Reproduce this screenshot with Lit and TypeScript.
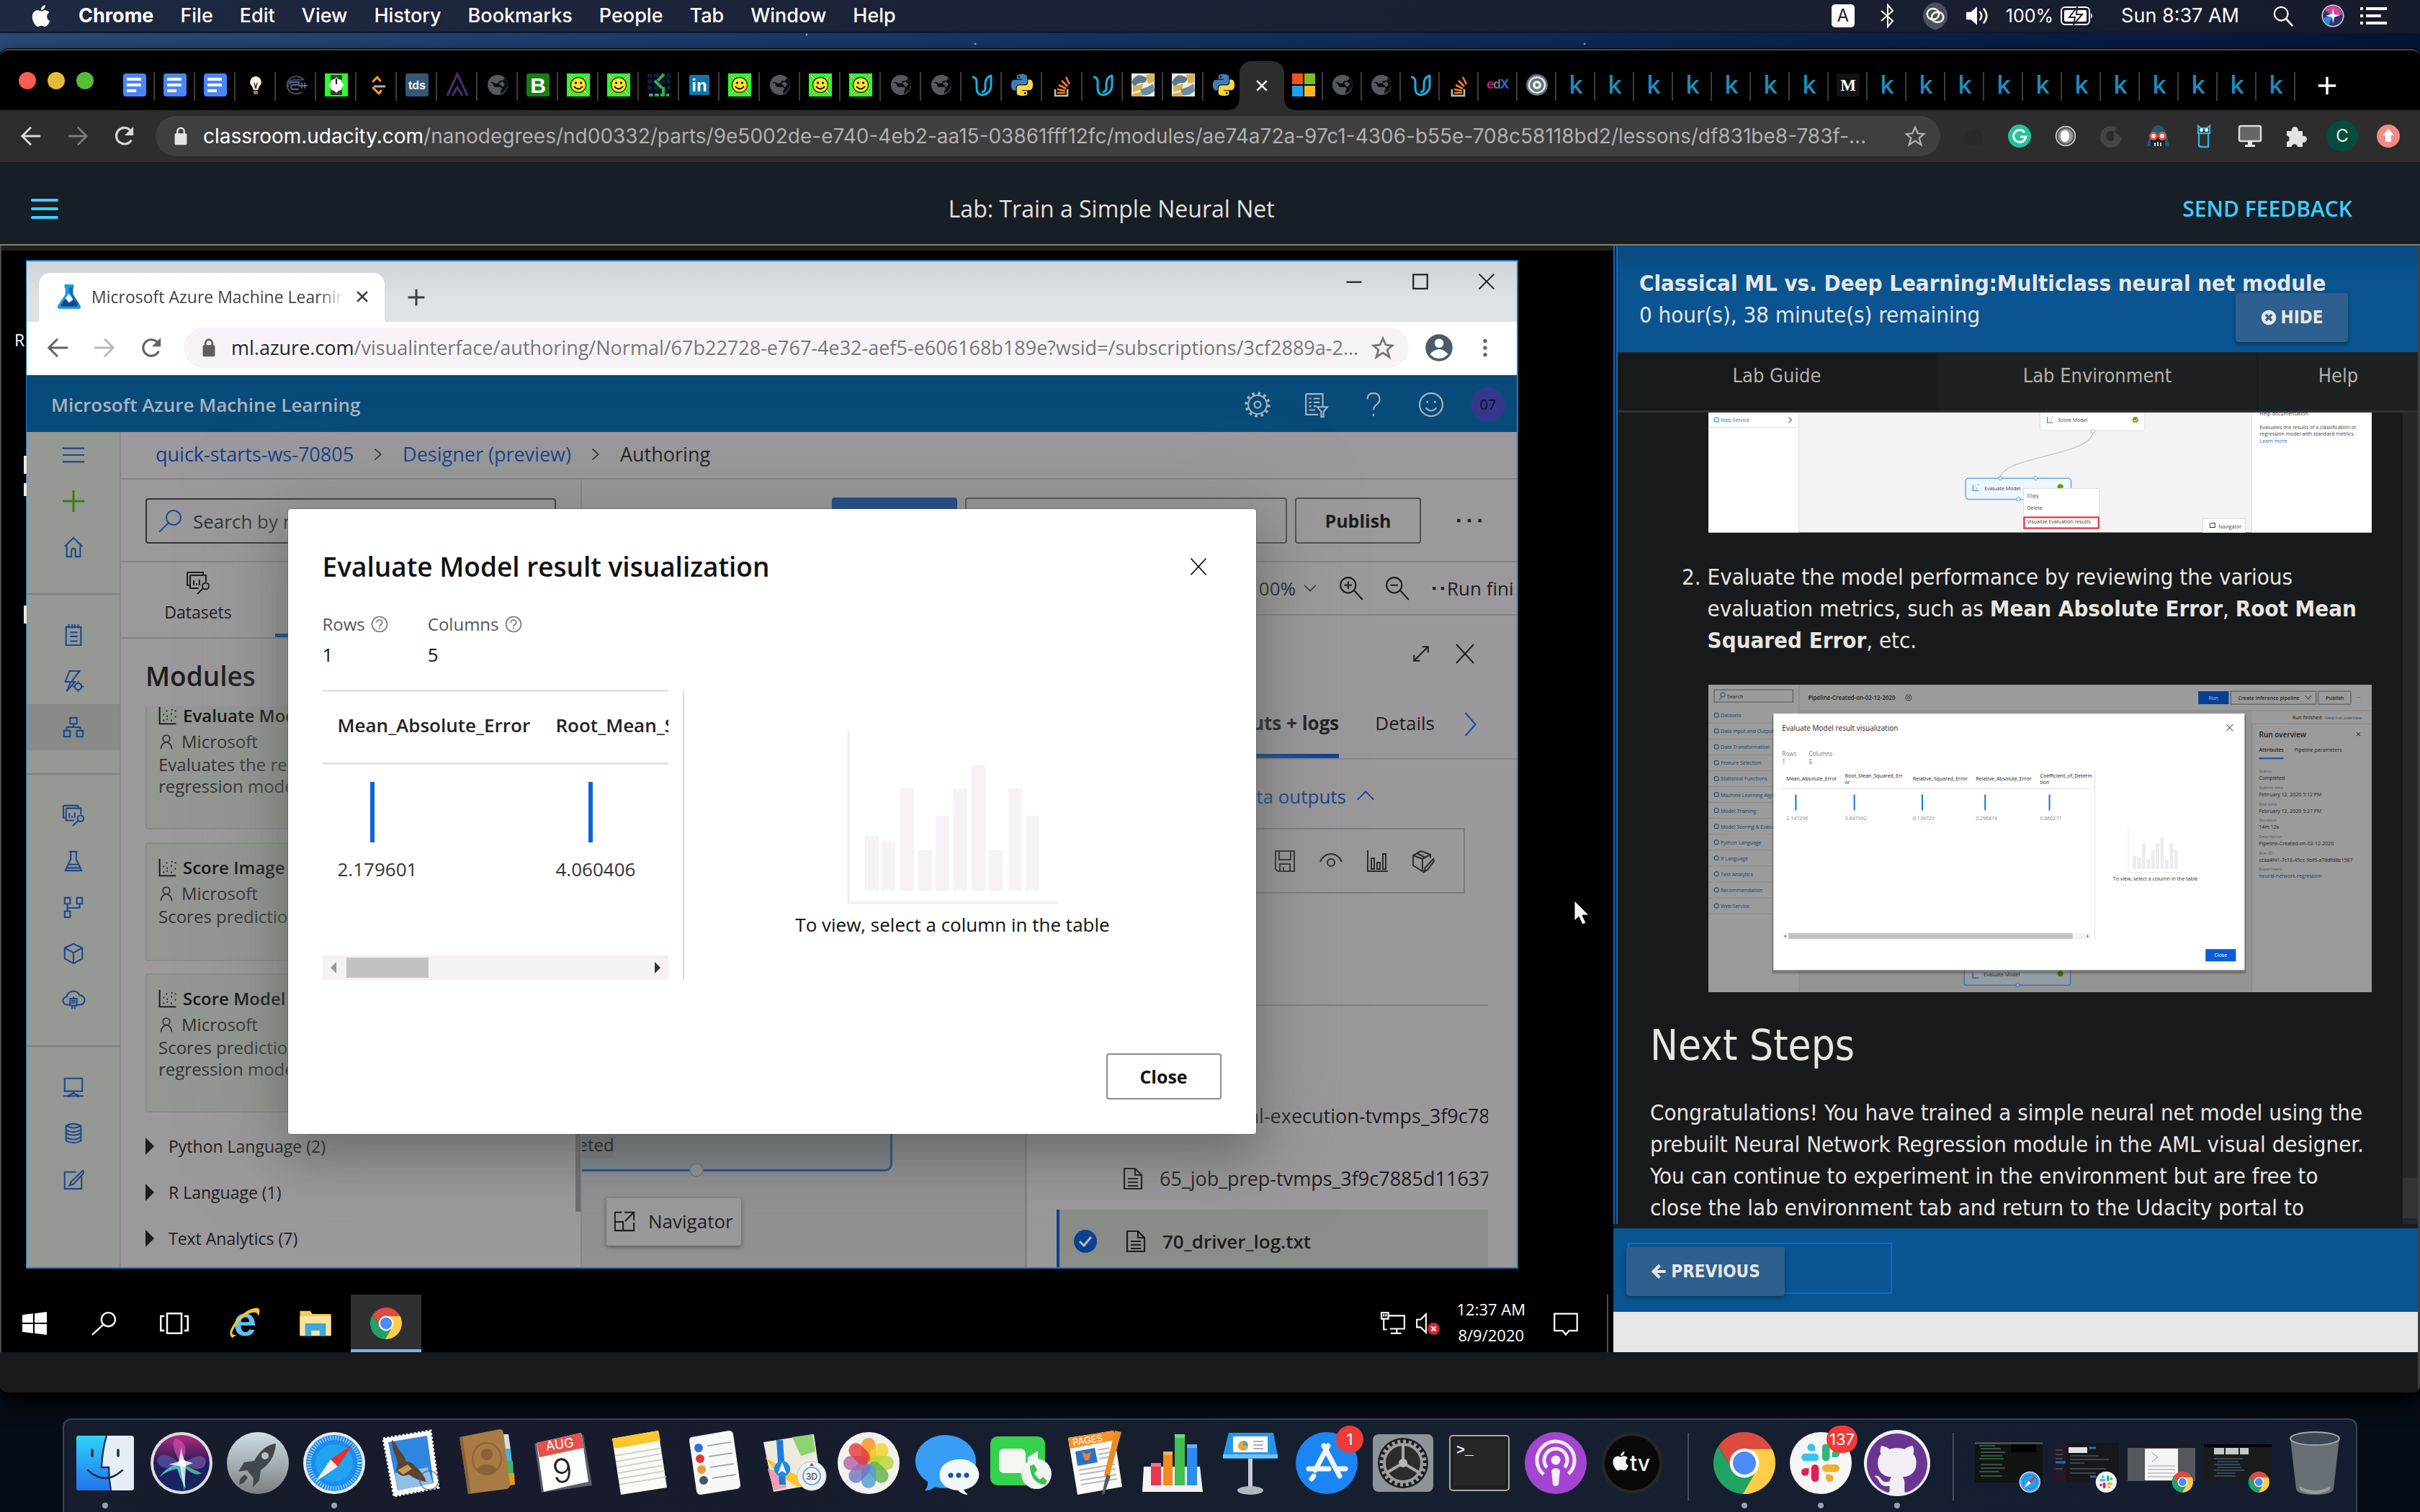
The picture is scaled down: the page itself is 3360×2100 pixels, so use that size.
import { LitElement, html, svg, css, TemplateResult } from "lit";
import { customElement } from "lit/decorators.js";

type Frag = unknown;

const reset = css`
  * { box-sizing: border-box; }
  button { font: inherit; color: inherit; background: none; border: 0; padding: 0; margin: 0; cursor: pointer; text-align: inherit; }
  a { color: inherit; text-decoration: none; }
  svg { display: block; flex: none; overflow: visible; }
  p, h1, h2, h3, ol, ul { margin: 0; padding: 0; font-weight: inherit; font-size: inherit; }
`;

const icon = (size: number, body: Frag, vb = 32): TemplateResult =>
  html`<svg width=${size} height=${size} viewBox="0 0 ${vb} ${vb}" fill="none" aria-hidden="true">${body}</svg>`;

const line = (size: number, d: string, w = 2): TemplateResult =>
  html`<svg width=${size} height=${size} viewBox="0 0 32 32" fill="none" stroke="currentColor" stroke-width=${w} aria-hidden="true"><path d=${d} /></svg>`;

const applePath =
  "M12.152 6.896c-.948 0-2.415-1.078-3.96-1.04-2.04.027-3.91 1.183-4.961 3.014-2.117 3.675-.546 9.103 1.519 12.09 1.013 1.454 2.208 3.09 3.792 3.039 1.52-.065 2.09-.987 3.935-.987 1.831 0 2.35.987 3.96.948 1.637-.026 2.676-1.48 3.676-2.948 1.156-1.688 1.636-3.325 1.662-3.415-.039-.013-3.182-1.221-3.22-4.857-.026-3.04 2.48-4.494 2.597-4.559-1.429-2.09-3.623-2.324-4.39-2.376-2-.156-3.675 1.09-4.61 1.09zM15.53 3.83c.843-1.012 1.4-2.427 1.245-3.83-1.207.052-2.662.805-3.532 1.818-.78.896-1.454 2.338-1.273 3.714 1.338.104 2.715-.688 3.559-1.701";

const octocatPath =
  "M12 .297c-6.63 0-12 5.373-12 12 0 5.303 3.438 9.8 8.205 11.385.6.113.82-.258.82-.577 0-.285-.01-1.04-.015-2.04-3.338.724-4.042-1.61-4.042-1.61C4.422 18.07 3.633 17.7 3.633 17.7c-1.087-.744.084-.729.084-.729 1.205.084 1.838 1.236 1.838 1.236 1.07 1.835 2.809 1.305 3.495.998.108-.776.417-1.305.76-1.605-2.665-.3-5.466-1.332-5.466-5.93 0-1.31.465-2.38 1.235-3.22-.135-.303-.54-1.523.105-3.176 0 0 1.005-.322 3.3 1.23.96-.267 1.98-.399 3-.405 1.02.006 2.04.138 3 .405 2.28-1.552 3.285-1.23 3.285-1.23.645 1.653.24 2.873.12 3.176.765.84 1.23 1.91 1.23 3.22 0 4.61-2.805 5.625-5.475 5.92.42.36.81 1.096.81 2.22 0 1.606-.015 2.896-.015 3.286 0 .315.21.69.825.57C20.565 22.092 24 17.592 24 12.297c0-6.627-5.373-12-12-12";

const snake =
  "M14.25.18l.9.2.73.26.59.3.45.32.34.34.25.34.16.33.1.3.04.26.02.2-.01.13V8.5l-.05.63-.13.55-.21.46-.26.38-.3.31-.33.25-.35.19-.35.14-.33.1-.3.07-.26.04-.21.02H8.77l-.69.05-.59.14-.5.22-.41.27-.33.32-.27.35-.2.36-.15.37-.1.35-.07.32-.04.27-.02.21v3.06H3.17l-.21-.03-.28-.07-.32-.12-.35-.18-.36-.26-.36-.36-.35-.46-.32-.59-.28-.73-.21-.88-.14-1.05-.05-1.23.06-1.22.16-1.04.24-.87.32-.71.36-.57.4-.44.42-.33.42-.24.4-.16.36-.1.32-.05.24-.01h.16l.06.01h8.16v-.83H6.18l-.01-2.75-.02-.37.05-.34.11-.31.17-.28.25-.26.31-.23.38-.2.44-.18.51-.15.58-.12.64-.1.71-.06.77-.04.84-.02 1.27.05zm-6.3 1.98l-.23.33-.08.41.08.41.23.34.33.22.41.09.41-.09.33-.22.23-.34.08-.41-.08-.41-.23-.33-.33-.22-.41-.09-.41.09z";

/* Chrome wheel on a 48 unit grid */
const wheel = (): Frag => svg`
  <g>
    ${[["#dd4b3e", 0], ["#1fa463", -120], ["#ffcd46", 120]].map(
      ([c, r]) => svg`<path fill=${c} transform="rotate(${r} 24 24)" d="M24 14H43.6A22 22 0 0 0 5.55 12.02L15.34 29A10 10 0 0 1 24 14z" />`
    )}
    <circle cx="24" cy="24" r="10.4" fill="#fff" />
    <circle cx="24" cy="24" r="8.2" fill="#4c8bf5" />
  </g>`;

/* Slack mark on a 24 unit grid */
const hash = (): Frag => svg`
  ${[["#2eb67d", 0], ["#ecb22e", 90], ["#e01e5a", 180], ["#36c5f0", 270]].map(
    ([c, r]) => svg`<g fill=${c} transform="rotate(${r} 12 12)"><rect x="13" y="0.5" width="4.6" height="10.5" rx="2.3" /><path d="M19 8.7V6.4a2.3 2.3 0 1 1 2.3 2.3z" /></g>`
  )}`;

const compass = (): Frag => svg`
  <circle cx="48" cy="48" r="43" fill="#e9edf0" /><circle cx="48" cy="48" r="39" fill="#1d8bf0" />
  <circle cx="48" cy="48" r="26" fill="#25b4f2" opacity=".6" />
  <circle cx="48" cy="48" r="35" stroke="#fff" stroke-width="6" stroke-dasharray="1 2.7" opacity=".85" />
  <path d="M74 22L53 53 43 43z" fill="#e8302f" /><path d="M22 74L43 43 53 53z" fill="#f2f2f2" />`;

/* ---------------- menu bar ---------------- */

@customElement("mac-menubar")
export class MacMenubar extends LitElement {
  static styles = [reset, css`
    :host { display: flex; align-items: center; justify-content: space-between; height: 46px; flex: none; padding: 0 46px 0 42px;
      background: linear-gradient(90deg, #1d2a42, #1b2033 50%, #171c2d); border-bottom: 2px solid #10182b;
      color: #fff; font: 500 27px/44px Inter, sans-serif; white-space: nowrap; }
    .menus { display: flex; gap: 37px; align-items: center; }
    .app { font-weight: 700; }
    .status { display: flex; gap: 22px; align-items: center; font-weight: 400; }
    .input { width: 32px; height: 32px; border-radius: 5px; background: #fff; color: #1b2033; font-size: 24px; line-height: 32px; text-align: center; }
    .pad { padding: 0 8px; }
    .slot { padding: 0 16px; }
    .thin { padding: 0 8px; }
    .power { display: flex; gap: 10px; align-items: center; padding-right: 8px; font-size: 25px; }
  `];
  render() {
    return html`
      <nav class="menus" aria-label="Menu bar">
        <svg width="30" height="32" viewBox="0 0 24 24" fill="#fff" role="img" aria-label="Apple"><path d=${applePath} /></svg>
        <button class="app">Chrome</button>
        ${["File", "Edit", "View", "History", "Bookmarks", "People", "Tab", "Window", "Help"].map((m) => html`<button>${m}</button>`)}
      </nav>
      <div class="status">
        <span class="input">A</span>
        <span class="thin">${line(32, "M7 9l16 14-7 8V1l7 8L7 23", 2)}</span>
        ${icon(40, svg`<path d="M16 1a15 15 0 0 1 6 28l-6 3-6-3A15 15 0 0 1 16 1z" fill="#4b5060" /><rect x="7" y="8" width="13" height="12" rx="6" stroke="#fff" stroke-width="2" /><rect x="12" y="12" width="13" height="11" rx="5.500" stroke="#fff" stroke-width="2" />`)}
        ${icon(34, svg`<path d="M1 11h6l8-7v24l-8-7H1z" fill="#fff" /><path d="M19 11q4 5 0 10M24 7q7 9 0 18" stroke="#fff" stroke-width="2.4" stroke-linecap="round" />`)}
        <span class="power">100%
          <svg width="46" height="26" viewBox="0 0 46 26" fill="none" aria-hidden="true"><rect x="1" y="1" width="39" height="24" rx="5" stroke="#fff" stroke-width="2" /><rect x="5" y="5" width="31" height="16" rx="2" fill="#fff" /><path d="M23 1L12 15h8l-2 10 12-14h-8z" fill="#fff" stroke="#1b2033" stroke-width="2" /><path d="M42 9q4 4 0 8z" fill="#fff" /></svg>
        </span>
        <span class="pad">Sun 8:37 AM</span>
        <span class="slot">${icon(30, svg`<circle cx="13" cy="13" r="10" stroke="#fff" stroke-width="2.4" /><path d="M20 20l10 11" stroke="#fff" stroke-width="2.8" />`)}</span>
        ${icon(32, svg`<circle cx="16" cy="16" r="15.5" fill="#ddd" /><circle cx="16" cy="16" r="14" fill="#31336e" /><path d="M16 2a14 14 0 0 1 13 12L16 17 5 8a14 14 0 0 1 11-6z" fill="#d0479c" /><path d="M2 19l14-3-6 13A14 14 0 0 1 2 19z" fill="#2a8cd8" /><path d="M16 5l2 9 8 1-8 3-2 9-1-9-9-2 9-3z" fill="#e9fbff" />`)}
        <svg width="37" height="26" viewBox="0 0 37 26" fill="#fff" aria-hidden="true"><path d="M0 1h4v4H0zM0 11h4v4H0zM0 21h4v4H0zM8 1h29v4H8zM8 11h21v4H8zM8 21h29v4H8z" /></svg>
      </div>`;
  }
}

/* ---------------- browser tabs and toolbar ---------------- */

const smile = svg`<rect width="32" height="32" fill="#2cff2c" /><path d="M3 3l26 26M29 3L3 29" stroke="#7b6a2a" stroke-width="3" /><path d="M3 3l26 26M29 3L3 29" stroke="#f4f0d8" stroke-width="1.500" /><circle cx="16" cy="16" r="10.5" fill="#ffe12e" stroke="#3b3200" stroke-width="1.4" /><circle cx="12.5" cy="13" r="1.6" fill="#000" /><circle cx="19.5" cy="13" r="1.6" fill="#000" /><path d="M10 18q6 7 12 0" stroke="#000" stroke-width="1.8" />`;
const globe = svg`<circle cx="16" cy="16" r="14" fill="#55585d" /><path d="M5 13q4-2 6 0t6 0q0-3 4-3t4-4q5 4 5 10-2 9-10 12-1-3 1-5t-1-4h-6q-4 0-4-3t-5-3z" fill="#0c0d0e" /><path d="M17 13q3 1 5-2l4 4-3 4z" fill="#55585d" />`;
const letter = (bg: string, fg: string, t: string, size: number, family = "Liberation Sans"): Frag =>
  svg`<rect width="32" height="32" rx="3" fill=${bg} /><text x="16" y=${16 + size * 0.36} text-anchor="middle" font-family=${family} font-weight="700" font-size=${size} fill=${fg}>${t}</text>`;

const favicons: Record<string, Frag> = {
  doc: svg`<rect width="32" height="32" rx="4" fill="#4a86f7" /><path d="M5 6h20v4H5zM5 14h20v4H5zM5 22h13v4H5z" fill="#fff" />`,
  bulb: svg`<path d="M16 4a8 8 0 0 1 5 14l-2 5h-6l-2-5a8 8 0 0 1 5-14z" fill="#fff3dc" /><path d="M13 24h6v5h-6z" fill="#8a8274" /><path d="M14 13l2 8 2-8" stroke="#222" stroke-width="1.4" />`,
  orbit: svg`<path d="M27 9A13 12 0 1 0 24 26M5 19q-1-9 8-10h12" stroke="#3d4c66" stroke-width="2.2" /><path d="M8 15q0-3 4-3h8v4h-8q-3 0-3 3t3 3h8M20 17h6M24 13v8M28 13v8M26 17h6" stroke="#55709a" stroke-width="1.800" />`,
  power: svg`<rect width="32" height="32" fill="#2cff2c" /><rect x="8" y="2" width="16" height="28" fill="#353535" /><path d="M16 5l3 3 4 1 1 4 3 3-3 3-1 4-4 1-3 3-3-3-4-1-1-4-3-3 3-3 1-4 4-1z" fill="#fff" /><path d="M16 7v8" stroke="#000" stroke-width="2" />`,
  leet: svg`<path d="M17 5l-6 6M21 10l-4-4M11 20l8 8M22 24l-3 4" stroke="#ffa116" stroke-width="3" stroke-linecap="round" /><path d="M12 18h16" stroke="#b3b3b3" stroke-width="3" />`,
  tds: letter("#355876", "#fff", "tds", 16),
  peak: svg`<path d="M2 31L14 5l2-4 2 4 12 26M9 31l7-12 7 12" stroke="#452c63" stroke-width="3.400" />`,
  globe,
  bold: letter("#148014", "#fff", "B", 30),
  smile,
  stride: svg`<rect width="32" height="32" fill="#05091a" /><path d="M0 3h32M0 11h32M0 20h32" stroke="#11203a" stroke-width="5" stroke-dasharray="6 3" /><path d="M23 1l-9 9M10 10l10 10M22 19v12" stroke="#2fae55" stroke-width="4" /><path d="M2 30h28" stroke="#2fae55" stroke-width="4" stroke-dasharray="6 2" />`,
  li: svg`<rect x="2" y="2" width="28" height="28" rx="2" fill="#0e76a8" /><text x="16" y="25" text-anchor="middle" font-family="Liberation Sans" font-weight="700" font-size="24" fill="#fff">in</text>`,
  u: svg`<path d="M3 5q6 0 6 7v8q0 9 7 10 13-2 13-14V3q-8 2-8 12v6q0 4-5 5" stroke="#17b1e3" stroke-width="3" stroke-linejoin="round" />`,
  py: svg`<g transform="translate(1 1) scale(1.25)"><path d=${snake} fill="#3d7fb4" /><path d=${snake} fill="#ffd63f" transform="rotate(180 12 12)" /></g>`,
  pyold: svg`<rect width="32" height="32" fill="#f0ecdf" /><path d="M0 12q6-12 14-9l8 3q-2 8-8 7T4 20z" fill="#57788f" /><path d="M20 2l11-2v12l-8 2z" fill="#d9b24b" /><path d="M2 16q6 2 14-2l-2 8-12 4z" fill="#d9b24b" /><path d="M12 22q10-2 18-8l2 10q-8 8-18 6z" fill="#6b8ca3" /><path d="M2 28l12-2 2 6H0z" fill="#d9b24b" />`,
  so: svg`<path d="M6 22v9h17v-9" stroke="#b9bcc0" stroke-width="2.6" /><path d="M9 27h11M9 22l11 2M11 16l10 5M15 10l8 8M21 5l5 10" stroke="#f58025" stroke-width="2.6" />`,
  ms: svg`<path d="M0 0h15v15H0z" fill="#f1511b" /><path d="M17 0h15v15H17z" fill="#80bb1f" /><path d="M0 17h15v15H0z" fill="#1ba1ee" /><path d="M17 17h15v15H17z" fill="#fbb724" />`,
  edx: svg`<g font-family="Liberation Sans" font-weight="700" font-size="18"><text x="0" y="21" fill="#b8256e">e</text><text x="9" y="21" fill="#6d7377">d</text><text x="19" y="21" fill="#1f74d6">X</text></g>`,
  swirl: svg`<circle cx="16" cy="16" r="15" fill="#66727a" /><path d="M25 10a11 11 0 0 0-20 6q0 5 4 8M7 22a11 11 0 0 0 20-6q0-5-4-8" stroke="#e6eaec" stroke-width="2.600" /><circle cx="16" cy="16" r="6" fill="#e6eaec" /><circle cx="16" cy="16" r="2.500" fill="#66727a" />`,
  k: svg`<text x="16" y="28" text-anchor="middle" font-family="Open Sans" font-weight="600" font-size="34" fill="#1a8dbe">k</text>`,
  m: letter("#121212", "#fff", "M", 23, "Liberation Serif"),
};

const before = "doc doc doc bulb orbit power leet tds peak globe bold smile smile stride li smile globe smile smile globe globe u py so u pyold pyold py".split(" ");
const after = "ms globe globe u so edx swirl k k k k k k k m k k k k k k k k k k k".split(" ");

@customElement("browser-chrome")
export class BrowserChrome extends LitElement {
  static styles = [reset, css`
    :host { display: block; flex: none; font: 28px/36px Inter, sans-serif; }
    .strip { display: flex; align-items: flex-end; height: 83px; background: #000; padding-left: 26px; }
    .lights { display: flex; gap: 16px; height: 83px; padding-top: 30px; width: 133px; flex: none; }
    .lights button { width: 24px; height: 24px; border-radius: 50%; }
    .red { background: #fd5b55; } .yellow { background: #e2ba3a; } .green { background: #58bd36; }
    .tab { width: 56px; height: 83px; padding-top: 32px; display: flex; justify-content: center; position: relative; flex: none; }
    .tab.small { width: 54px; }
    .tab::after { content: ""; position: absolute; right: 0; top: 30px; height: 40px; width: 2px; background: #3c3c3c; }
    .tab.last::after { display: none; }
    .active { width: 62px; height: 68px; border-radius: 16px 16px 0 0; background: #2d2d2d; color: #e8e8e8; display: flex; align-items: center; justify-content: center; flex: none; position: relative; margin-left: -6px; }
    .active::before, .active::after { content: ""; position: absolute; bottom: 0; width: 14px; height: 14px; }
    .active::before { left: -14px; background: radial-gradient(circle at 0 0, transparent 13px, #2d2d2d 14px); }
    .active::after { right: -14px; background: radial-gradient(circle at 14px 0, transparent 13px, #2d2d2d 14px); }
    .plus { height: 83px; padding: 14px 0 0 30px; }
    .bar { display: flex; align-items: center; height: 74px; background: #2d2d2d; border-bottom: 2px solid #1c1c1c; padding: 0 28px; gap: 16px; }
    .navs { display: flex; gap: 35px; color: #d9d9d9; padding-right: 12px; }
    .dim { color: #7b7b7b; }
    .omni { flex: 1; min-width: 0; height: 56px; border-radius: 28px; background: #3f3f3f; display: flex; align-items: center; gap: 16px; padding: 0 20px; white-space: nowrap; color: #b0b0b0; }
    .omni b { color: #fff; font-weight: 400; }
    .url { flex: 1; overflow: hidden; }
    .ext { display: flex; gap: 32px; align-items: center; padding-left: 14px; }
    .me { width: 44px; height: 44px; margin: 0 -6px; border-radius: 50%; background: #054c3c; color: #e6f2ee; font-size: 24px; line-height: 44px; text-align: center; }
  `];
  render() {
    return html`
      <div class="strip">
        <div class="lights"><button class="red" aria-label="Close"></button><button class="yellow" aria-label="Minimize"></button><button class="green" aria-label="Zoom"></button></div>
        ${before.map((f, i) => html`<button class="tab ${i === before.length - 1 ? "last" : ""}" aria-label="Tab ${i + 1}">${icon(32, favicons[f])}</button>`)}
        <button class="active" aria-label="Close tab">${line(24, "M7 7l18 18M25 7L7 25", 3.4)}</button>
        ${after.map((f, i) => html`<button class="tab small" aria-label="Tab ${i + 30}">${icon(32, favicons[f])}</button>`)}
        <button class="plus" aria-label="New tab">${icon(28, svg`<path d="M16 2v28M2 16h28" stroke="#fff" stroke-width="4" />`)}</button>
      </div>
      <div class="bar">
        <div class="navs">
          <button aria-label="Back">${line(30, "M30 16H4M16 3L3 16l13 13", 3)}</button>
          <button class="dim" aria-label="Forward">${line(30, "M2 16h26M16 3l13 13-13 13", 3)}</button>
          <button aria-label="Reload">${icon(30, svg`<path d="M26 22a12 12 0 1 1-1-14" stroke="currentColor" stroke-width="3.4" /><path d="M29 2v13H16z" fill="currentColor" />`)}</button>
        </div>
        <div class="omni">
          ${icon(30, svg`<rect x="7" y="12" width="18" height="17" rx="2" fill="#e4e4e4" /><path d="M11 13V9a5 5 0 0 1 10 0v4" stroke="#e4e4e4" stroke-width="2.6" />`)}
          <a class="url" href="#lesson"><b>classroom.udacity.com</b>/nanodegrees/nd00332/parts/9e5002de-e740-4eb2-aa15-03861fff12fc/modules/ae74a72a-97c1-4306-b55e-708c58118bd2/lessons/df831be8-783f-…</a>
          <button aria-label="Bookmark">${line(30, "M16 3l4 9 9 1-7 6 3 10-9-6-9 6 3-10-7-6 9-1z", 2.4)}</button>
        </div>
        <div class="ext">
          ${icon(32, svg`<path d="M4 28V12l12-8 12 8v16z" fill="#292929" />`)}
          ${icon(32, svg`<circle cx="16" cy="16" r="16" fill="#24c39a" /><path d="M23 11a8.5 8.5 0 1 0 1.600 6H17" stroke="#fff" stroke-width="3" />`)}
          ${icon(32, svg`<circle cx="16" cy="16" r="14" fill="#f3f3f3" /><circle cx="16" cy="16" r="11.500" stroke="#555" stroke-width="2.500" fill="#999" /><ellipse cx="15" cy="16" rx="6" ry="8" fill="#fff" />`)}
          ${icon(32, svg`<path d="M24 5a15 15 0 1 0 6 13l-8-1a7 7 0 1 1-3-7z" fill="#454545" /><path d="M19 10l9 6-9 6z" fill="#454545" />`)}
          ${icon(32, svg`<path d="M0 30l5-12Q8 0 17 1t12 17l3 12z" fill="#205a70" /><path d="M6 30V14h20v16z" fill="#12242e" /><circle cx="10" cy="16" r="4.500" fill="#f1e4dc" stroke="#e2513c" stroke-width="3" /><circle cx="22" cy="16" r="4.500" fill="#f1e4dc" stroke="#e2513c" stroke-width="3" /><path d="M12 25v5M16 24v6M20 25v5" stroke="#fff" stroke-width="1.600" />`)}
          ${icon(32, svg`<path d="M9 12v16q0 3 4 3h9V12M8 2l4 3h8l4-3v10H8z" stroke="#2eb1dd" stroke-width="2.400" /><circle cx="12.500" cy="7.500" r="2.500" fill="#fff" /><circle cx="19.500" cy="7.500" r="2.500" fill="#fff" />`)}
          ${icon(32, svg`<rect x="1" y="2" width="30" height="21" rx="2" fill="#666" stroke="#e0e0e0" stroke-width="2.400" /><path d="M13 23h6v5h4v3H9v-3h4z" fill="#e8e8e8" />`)}
          ${icon(32, svg`<path d="M3 9h7a4.500 4.500 0 1 1 8.500 0H25v7a4.500 4.500 0 1 1 0 8.500V31H18a4.300 4.300 0 0 0-8.500 0H3v-7a4.300 4.300 0 0 0 0-8.500z" fill="#e3e3e3" />`)}
          <div class="me">C</div>
          ${icon(32, svg`<circle cx="16" cy="16" r="16" fill="#f28b82" /><path d="M16 6l8 9h-4v9h-8v-9H8z" fill="#fff" />`)}
        </div>
      </div>`;
  }
}

/* ---------------- remote desktop with the Azure designer ---------------- */

const g = {
  menu: "M0 6h32M0 16h32M0 26h32",
  add: "M16 0v32M0 16h32",
  home: "M3 15L16 2l13 13M6 13v17h7v-9q0-3 3-3t3 3v9h7V13",
  note: "M5 4h22v27H5zM9 0v6M14 0v6M18 0v6M23 0v6M11 12h11M11 18h11M11 25h11",
  bolt: "M18 1h-8L4 17h8L6 31l12-14h-5L25 1zM18 24a5 5 0 1 0 10 0a5 5 0 1 0-10 0M23 16v3M23 29v3M15 24h3M28 24h3",
  tree: "M11 2h10v9H11zM2 21h9v9H2zM21 21h9v9h-9zM16 11v5M6 21v-5h20v5",
  data: "M1 2h22v4M1 2v18h4M5 6h22v9M5 6v18h12M10 13v7M14 17v3M18 12v8M22 21a4.500 4.500 0 1 0 9 0a4.500 4.500 0 1 0-9 0M23 24l-8 8",
  flask: "M10 2h12M12 2v11L4 30h24L20 13V2M8 21h16M6 26h20",
  pipe: "M3 2h8v9H3zM21 2h8v9h-8zM3 22h8v9H3zM7 11v11M25 11v6H7",
  cube: "M16 2l13 6v16l-13 7-13-7V8zM3 8l13 7 13-7M16 15v16",
  cloud: "M10 24H7a6 6 0 0 1-1-12 10 10 0 0 1 19-2 7 7 0 0 1 1 14h-4M11 15h10v10H11zM14 25v5M18 25v5M16 12v3M13 18h6M13 21h6",
  compute: "M3 3h26v19H3zM16 22v4M9 31v-3l7-3 7 3v3M1 29h30",
  db: "M5 5q11-6 22 0v22q-11 6-22 0zM5 5q11 6 22 0M5 11q11 6 22 0M5 16q11 6 22 0M5 22q11 6 22 0",
  edit: "M20 5H3v25h25V12M30 3L13 19l-3 6 6-2L31 7z",
  person: "M9 10a7 7 0 1 0 14 0a7 7 0 1 0-14 0M5 31q1-12 11-14 10 2 11 14",
  scatter: "M2 1v29h28M8 24h2M14 22h2M21 24h2M8 14h2M14 17h2M21 13h2M13 8h2M22 6h2M28 18h2M28 8h2",
  close: "M4 3l24 26M28 3L4 29",
  file: "M4 2h15l9 9v19H4zM19 2v9h9M9 16h14M9 21h14M9 26h14",
  magnify: "M11 11a10 10 0 1 0 20 0a10 10 0 1 0-20 0M14 18L1 31",
  chevR: "M10 6l11 10-11 10",
  expand: "M18 4h10v10M28 4L4 28M4 18v10h10",
};

const rail: [keyof typeof g, string, string][] = [
  ["menu", "Menu", ""], ["add", "New", "new"], ["home", "Home", "end"],
  ["note", "Notebooks", ""], ["bolt", "Automated ML", ""], ["tree", "Designer", "on end"],
  ["data", "Datasets", ""], ["flask", "Experiments", ""], ["pipe", "Pipelines", ""], ["cube", "Models", ""], ["cloud", "Endpoints", "end"],
  ["compute", "Compute", ""], ["db", "Datastores", ""], ["edit", "Data labeling", ""],
];

const modules: [string, string, string[]][] = [
  ["Evaluate Model", "first", ["Evaluates the results", "regression model with"]],
  ["Score Image Model", "second", ["Scores predictions for"]],
  ["Score Model", "", ["Scores predictions for", "regression model"]],
];

const bars = [[24, 76], [47, 68], [73, 142], [98, 56], [122, 104], [147, 142], [172, 174], [196, 56], [223, 142], [247, 104]];

@customElement("remote-desktop")
export class RemoteDesktop extends LitElement {
  static styles = [reset, css`
    :host { display: flex; flex-direction: column; min-height: 0; min-width: 0; position: relative; background: #000; font: 26px/36px "Open Sans", "Noto Sans", sans-serif; white-space: nowrap; border-left: 2px solid #4a4b4c; }
    .topline { height: 7px; background: #202123; flex: none; }
    .desk { flex: 1; min-height: 0; position: relative; padding: 13px 132px 36px 34px; display: flex; }
    .behind { position: absolute; color: #fff; font-size: 23px; left: 18px; top: 106px; }
    .mark { position: absolute; left: 31px; width: 4px; background: #e8e8e8; }
    .m1 { top: 285px; height: 25px; } .m2 { top: 323px; height: 18px; } .m3 { top: 493px; height: 25px; }
    .win { flex: 1; min-width: 0; display: flex; flex-direction: column; border: 2px solid #1d78c8; border-left-width: 1px; overflow: hidden; }
    .tabs { height: 84px; flex: none; background: linear-gradient(#cfd3d7, #dde2e6 60%); display: flex; justify-content: space-between; padding: 16px 30px 0 17px; color: #3c4043; }
    .tabs .left, .tabs .right { display: flex; }
    .tabs .tab { width: 480px; height: 68px; background: #fff; border-radius: 16px 16px 0 0; display: flex; align-items: center; gap: 14px; padding: 0 20px 2px 25px; font-size: 23px; }
    .tabs .t { flex: 1; overflow: hidden; -webkit-mask-image: linear-gradient(90deg, #000 90%, transparent); mask-image: linear-gradient(90deg, #000 90%, transparent); }
    .new { padding: 0 30px 0; }
    .ctl { display: flex; gap: 68px; height: 24px; color: #222; }
    .bar { height: 74px; flex: none; background: #fff; display: flex; align-items: center; gap: 30px; padding: 0 30px 2px 28px; color: #5f6368; }
    .omni { flex: 1; min-width: 0; height: 56px; border-radius: 28px; background: #f6f2f6; display: flex; align-items: center; gap: 16px; padding: 0 20px; color: #77777b; margin-right: -8px; font-size: 27px; }
    .omni a { flex: 1; overflow: hidden; } .omni b { font-weight: 400; color: #27282a; }
    .back { display: flex; gap: 35px; }
    .pale { color: #b9bbbd; }
    .aml { flex: 1; min-height: 0; position: relative; display: flex; flex-direction: column; background: #9c999c; color: #1d1c1e; }
    .head { height: 79px; flex: none; background: #084b7b; color: #a9b3ba; display: flex; align-items: center; justify-content: space-between; padding: 2px 16px 0 34px; }
    .head h1 { font-size: 26px; font-weight: 600; }
    .head div { display: flex; gap: 46px; align-items: center; }
    .avatar { width: 48px; height: 48px; border-radius: 50%; background: #35388a; color: #0d0d2c; font-size: 20px; line-height: 48px; text-align: center; margin-left: -8px; }
    .body { flex: 1; min-height: 0; display: flex; }
    .rail { width: 131px; flex: none; background: #959893; border-right: 2px solid #868786; color: #1c4790; display: flex; flex-direction: column; }
    .rail button { height: 64px; flex: none; display: flex; align-items: center; justify-content: center; width: 100%; }
    .rail .new-item { color: #3c7d10; }
    .rail .gap { height: 34px; margin-bottom: 24px; border-bottom: 2px solid #7f817e; flex: none; }
    .rail .on { background: #888b87; }
    .main { flex: 1; min-width: 0; display: flex; flex-direction: column; }
    .crumbs { height: 66px; flex: none; border-bottom: 2px solid #858386; display: flex; align-items: center; gap: 22px; padding: 0 0 2px 48px; font-size: 27px; }
    .crumbs a { color: #123f8e; }
    .cols { flex: 1; min-height: 0; display: flex; }
    .side { width: 640px; flex: none; border-right: 2px solid #868786; display: flex; flex-direction: column; overflow: hidden; position: relative; }
    .find { height: 115px; flex: none; border-bottom: 2px solid #858386; padding: 26px 34px; }
    .search { height: 63px; border: 2px solid #343335; border-radius: 4px; display: flex; align-items: center; gap: 14px; padding: 0 16px; color: #1d4ea0; }
    .search input { flex: 1; min-width: 0; border: 0; background: none; font: inherit; color: #222; outline: 0; }
    .search input::placeholder { color: #333235; opacity: 1; }
    .switch { height: 106px; flex: none; border-bottom: 2px solid #858386; display: flex; font-size: 23px; line-height: 30px; }
    .switch button { width: 214px; display: flex; flex-direction: column; align-items: center; gap: 10px; padding-top: 12px; }
    .switch .cur { border-bottom: 5px solid #0a3f97; color: #0a3f97; }
    .side h2 { font-size: 37px; line-height: 48px; font-weight: 600; padding: 28px 0 0 34px; height: 94px; flex: none; }
    .card { margin: 0 34px 17px; background: #949792; border: 2px solid #8a8d88; border-radius: 3px; padding: 14px 16px 0; height: 165px; flex: none; font-size: 24px; line-height: 30px; color: #333; }
    .card.tall { height: 193px; }
    .clip { flex: none; overflow: hidden; height: 172px; margin-bottom: 17px; }
    .clip .card { margin-top: -22px; margin-bottom: 0; }
    .card h3 { font-size: 24px; font-weight: 600; line-height: 38px; color: #141414; display: flex; align-items: center; gap: 8px; }
    .card .by { display: flex; align-items: center; gap: 10px; line-height: 34px; }
    .cat { display: flex; align-items: center; gap: 20px; height: 64px; flex: none; padding: 0 0 4px 34px; font-size: 23px; font-weight: 500; }
    .tri { width: 0; height: 0; border-left: 12px solid #1d1c1e; border-top: 12px solid transparent; border-bottom: 12px solid transparent; }
    .thumb { position: absolute; right: 0; top: 640px; width: 7px; height: 377px; background: #6d6c6f; }
    .right { flex: 1; min-width: 0; display: flex; flex-direction: column; }
    .cmds { height: 115px; flex: none; border-bottom: 2px solid #858386; display: flex; align-items: center; justify-content: flex-end; gap: 11px; padding-right: 48px; }
    .cmds button { height: 64px; line-height: 60px; border: 2px solid #4f4d50; border-radius: 4px; text-align: center; font-weight: 700; font-size: 25px; }
    .cmds .run { width: 174px; background: #073a8b; border-color: #073a8b; color: #a9b6cc; }
    .cmds .inf { width: 447px; } .cmds .pub { width: 175px; }
    .cmds .more { border: 0; margin-left: 38px; }
    .zoom { height: 74px; flex: none; border-bottom: 2px solid #858386; display: flex; align-items: center; justify-content: flex-end; gap: 30px; overflow: hidden; padding-right: 3px; }
    .zoom .pct { display: flex; align-items: center; gap: 10px; }
    .zoom .state { margin-left: -42px; width: 94px; overflow: hidden; }
    .split { flex: 1; min-height: 0; display: flex; }
    .canvas { width: 618px; flex: none; background: #929093; border-right: 3px solid #828184; position: relative; overflow: hidden; }
    .node { position: absolute; left: -300px; top: 620px; width: 731px; height: 152px; border: 3px solid #1a4a96; border-radius: 10px; background: #80868e; }
    .done { position: absolute; left: -78px; top: 717px; width: 122px; text-align: right; padding-right: 2px; font-size: 24px; background: #7c7e82; color: #111; }
    .port { position: absolute; left: 149px; top: 760px; width: 20px; height: 20px; border-radius: 50%; border: 2px solid #767679; background: #989699; }
    .navi { position: absolute; left: 34px; top: 809px; width: 187px; height: 66px; background: #9b999c; border-radius: 3px; box-shadow: 0 2px 6px rgba(0,0,0,.4); display: flex; align-items: center; gap: 18px; padding: 0 0 3px 10px; font-size: 26px; }
    .pane { flex: 1; min-width: 0; display: flex; flex-direction: column; padding: 0 40px 0 41px; overflow: hidden; background: #9b989b; }
    .pane .tools { height: 106px; flex: none; display: flex; justify-content: flex-end; align-items: center; gap: 32px; padding-right: 16px; }
    .ptabs { height: 94px; flex: none; border-bottom: 2px solid #8a888b; margin: 0 -40px 0 -41px; padding-right: 48px; display: flex; justify-content: flex-end; align-items: stretch; gap: 50px; line-height: 86px; }
    .ptabs .cur { font-weight: 700; border-bottom: 6px solid #0d4093; }
    .ptabs svg { margin: 28px 0 0 -18px; color: #164ea8; }
    .outs { height: 95px; flex: none; display: flex; justify-content: flex-end; align-items: center; gap: 14px; color: #123f8e; padding: 6px 157px 0 0; }
    .icons { height: 91px; flex: none; border: 2px solid #7d7b7e; margin-right: 32px; display: flex; align-items: center; justify-content: flex-end; gap: 32px; padding-right: 40px; color: #2c2b2d; }
    .rule { height: 156px; flex: none; border-bottom: 2px solid #807e81; }
    .files { padding-top: 109px; overflow: hidden; list-style: none; }
    .files li { height: 87px; display: flex; align-items: center; font-size: 27px; overflow: hidden; padding-left: 90px; gap: 21px; }
    .files .sel { background: #8b8d89; border-left: 4px solid #0d4093; padding-left: 20px; font-weight: 600; font-size: 26px; }
    .files .sel svg:first-child { margin-right: 17px; }
    .veil { position: absolute; inset: 0; display: flex; align-items: center; justify-content: center; }
    .modal { width: 1344px; background: #fff; border-radius: 4px; padding: 48px; box-shadow: 0 30px 60px rgba(30,30,30,.28), 0 0 0 1px rgba(70,70,70,.3), 0 4px 120px 30px rgba(120,130,120,.45); color: #111; }
    .modal header { display: flex; justify-content: space-between; height: 64px; align-items: center; padding-right: 18px; }
    .modal header h2 { font-size: 37px; line-height: 48px; font-weight: 600; }
    .meta { display: flex; gap: 55px; margin-top: 32px; }
    .meta dt { display: flex; gap: 8px; align-items: center; font-size: 24px; line-height: 32px; color: #555; }
    .meta dd { margin: 10px 0 0; line-height: 32px; }
    dl { margin: 0; }
    .result { display: flex; gap: 20px; margin-top: 33px; height: 403px; }
    .grid { width: 480px; overflow: hidden; display: flex; flex-direction: column; justify-content: space-between; }
    table { border-collapse: collapse; table-layout: fixed; width: 909px; border-top: 3px solid #e4e2e4; }
    th, td { padding: 0 0 0 21px; text-align: left; font-size: 26px; }
    th { height: 101px; font-weight: 600; border-bottom: 3px solid #e4e2e4; padding-bottom: 6px; color: #222; }
    td { padding-top: 24px; line-height: 36px; color: #333; }
    .spark { width: 6px; height: 84px; background: #0f62dc; margin: 0 0 19px 45px; }
    .scroll { height: 34px; background: #f5f1f5; display: flex; align-items: center; padding: 0 11px; gap: 18px; }
    .scroll i { border: 8px solid transparent; border-right: 8px solid #999; border-left: 0; margin-right: -4px; }
    .scroll i.r { border-right: 0; border-left: 8px solid #333; margin: 0; }
    .scroll .track { flex: 1; } .scroll .thm { width: 114px; height: 28px; background: #c3c1c4; }
    .pick { flex: 1; border-left: 2px solid #dedcde; display: flex; flex-direction: column; align-items: center; gap: 10px; padding-top: 58px; }
    .modal footer { margin-top: 102px; display: flex; justify-content: flex-end; }
    .modal footer button { width: 160px; height: 64px; border: 2px solid #8b898c; border-radius: 4px; text-align: center; font-weight: 700; font-size: 25px; }
    .cursor { position: absolute; left: 2183px; top: 902px; }
    .task { height: 80px; flex: none; display: flex; align-items: center; color: #fff; padding-left: 28px; }
    .task .go { width: 98px; display: flex; justify-content: center; flex: none; }
    .task .go:first-child { width: 80px; margin-right: 7px; margin-left: -22px; }
    .task .active { background: #303032; height: 80px; align-items: center; border-bottom: 4px solid #76b9ed; padding-top: 4px; }
    .tray { margin-left: auto; display: flex; align-items: center; gap: 14px; height: 80px; padding-right: 7px; }
    .clock { font-size: 22px; line-height: 36px; text-align: center; padding: 0 24px 4px 9px; }
    .peek { width: 2px; height: 80px; background: #4e4e4e; margin-left: 25px; }
    .under { height: 56px; background: #191a1d; flex: none; margin-left: -2px; }
  `];

  private aml() {
    return html`
      <div class="aml">
        <div class="head">
          <h1>Microsoft Azure Machine Learning</h1>
          <div>
            ${icon(36, svg`<circle cx="16" cy="16" r="11.500" stroke="currentColor" stroke-width="1.800" /><circle cx="16" cy="16" r="4" stroke="currentColor" stroke-width="2" /><circle cx="16" cy="16" r="14" stroke="currentColor" stroke-width="3.400" stroke-dasharray="3.200 4.130" />`)}
            ${line(34, "M3 2h22v17M3 2v27h16M7 8h3M13 8h8M7 13h3M13 13h8M7 18h3M13 18h4M7 23h8M18 19h13l-5 6v7h-3v-7z")}
            ${line(34, "M8 9q0-8 8-8t8 8q0 4-4 7t-4 7M16 28v3")}
            ${line(34, "M1 16a15 15 0 1 0 30 0a15 15 0 1 0-30 0M11 11v3M21 11v3M9 20q7 8 14 0")}
            <span class="avatar">07</span>
          </div>
        </div>
        <div class="body">
          <nav class="rail" aria-label="Workspace">
            ${rail.map(([k, label, flag]) => html`<button class="${flag.includes("on") ? "on" : ""} ${flag === "new" ? "new-item" : ""}" aria-label=${label}>${line(30, g[k], flag === "new" ? 3.2 : 2.2)}</button>${flag.includes("end") ? html`<div class="gap"></div>` : ""}`)}
          </nav>
          <div class="main">
            <div class="crumbs"><a href="#ws">quick-starts-ws-70805</a>${line(24, g.chevR)}<a href="#designer">Designer (preview)</a>${line(24, g.chevR)}<span>Authoring</span></div>
            <div class="cols">
              <div class="side">
                <div class="find"><label class="search">${line(32, g.magnify, 2)}<input placeholder="Search by name" aria-label="Search by name" /></label></div>
                <div class="switch"><button>${line(32, g.data, 2)}Datasets</button><button class="cur">${line(32, g.cube, 2)}Modules</button></div>
                <h2>Modules</h2>
                ${modules.map(([name, cls, text], i) => {
                  const card = html`<div class="card ${i === 1 ? "" : "tall"}"><h3>${line(26, g.scatter, 2.4)}${name}</h3><div class="by">${line(22, g.person, 2.6)}Microsoft</div>${text.map((t) => html`<div>${t}</div>`)}</div>`;
                  return cls === "first" ? html`<div class="clip">${card}</div>` : card;
                })}
                ${["Python Language (2)", "R Language (1)", "Text Analytics (7)"].map((c) => html`<button class="cat"><span class="tri"></span>${c}</button>`)}
                <div class="thumb"></div>
              </div>
              <div class="right">
                <div class="cmds"><button class="run">Run</button><button class="inf">Create inference pipeline</button><button class="pub">Publish</button><button class="more" aria-label="More">${icon(36, svg`<path d="M1 14h4v4H1zM14 14h4v4h-4zM27 14h4v4h-4z" fill="#222" />`)}</button></div>
                <div class="zoom"><span class="pct">100% ${line(20, "M3 9l13 13L29 9", 2)}</span>${line(34, "M2 12a10 10 0 1 0 20 0a10 10 0 1 0-20 0M20 19l11 12M12 7v10M7 12h10")}${line(34, "M2 12a10 10 0 1 0 20 0a10 10 0 1 0-20 0M20 19l11 12M7 12h10")}${icon(34, svg`<path d="M2 14h4v4H2zM13 14h4v4h-4z" fill="#222" />`)}<span class="state">Run finished</span></div>
                <div class="split">
                  <div class="canvas">
                    <div class="node"></div><div class="done">Completed</div><div class="port"></div>
                    <button class="navi">${line(30, "M2 3h10M2 3v27h28V18M16 3h14v12M30 3L17 16M2 17h12v13", 2.2)}Navigator</button>
                  </div>
                  <div class="pane">
                    <div class="tools">${line(26, g.expand, 2.4)}${line(32, g.close, 2)}</div>
                    <div class="ptabs"><span class="cur">Outputs + logs</span><span>Details</span>${line(34, "M10 1l13 15-13 15", 2)}</div>
                    <div class="outs">Show data outputs ${line(26, "M2 22L16 8l14 14", 2)}</div>
                    <div class="icons">
                      ${line(32, "M3 2h26v28H6l-3-3zM8 2v12h16V2M9 30V20h14v10M14 24v5")}
                      ${line(32, "M1 17Q6 6 16 6t15 11M11 18a5 5 0 1 0 10 0a5 5 0 1 0-10 0")}
                      ${line(32, "M3 1v29h28M8 12h4v15H8zM16 18h4v9h-4zM24 6h4v21h-4z")}
                      ${line(32, "M13 2l13 5v5M13 2L2 8v14l13 8V13L2 8M15 13l11-6M7 5l12 6M30 13L19 25l-2 6 5-3 9-12z")}
                    </div>
                    <div class="rule"></div>
                    <ul class="files">
                      <li>${line(32, g.file, 2.2)}55_azureml-execution-tvmps_3f9c7885d</li>
                      <li>${line(32, g.file, 2.2)}65_job_prep-tvmps_3f9c7885d11637</li>
                      <li class="sel">${icon(32, svg`<circle cx="16" cy="16" r="16" fill="#0d4093" /><path d="M8 16l6 6 10-12" stroke="#b6bdcb" stroke-width="3" />`)}${line(32, g.file, 2.2)}70_driver_log.txt</li>
                    </ul>
                  </div>
                </div>
              </div>
            </div>
          </div>
        </div>
        <div class="veil">
          <section class="modal" role="dialog" aria-label="Evaluate Model result visualization">
            <header><h2>Evaluate Model result visualization</h2><button aria-label="Dismiss">${line(28, g.close, 1.8)}</button></header>
            <div class="meta">
              ${[["Rows", "1"], ["Columns", "5"]].map(([k, v]) => html`<dl><dt>${k}${icon(24, svg`<circle cx="16" cy="16" r="14" stroke="#777" stroke-width="2.200" /><path d="M11 13q0-5 5-5t5 5q0 2-3 4-2 1-2 3M16 22v3" stroke="#777" stroke-width="2.200" />`)}</dt><dd>${v}</dd></dl>`)}
            </div>
            <div class="result">
              <div class="grid">
                <table><thead><tr><th>Mean_Absolute_Error</th><th>Root_Mean_Squared_Error</th><th>Relative_Squared_Error</th></tr></thead>
                  <tbody><tr><td><div class="spark"></div>2.179601</td><td><div class="spark"></div>4.060406</td><td></td></tr></tbody></table>
                <div class="scroll"><i></i><div class="thm"></div><div class="track"></div><i class="r"></i></div>
              </div>
              <div class="pick">
                <svg width="292" height="240" viewBox="0 0 292 240" aria-hidden="true"><path d="M1 0v238h291" fill="none" stroke="#f0edf0" stroke-width="3" />${bars.map(([x, h]) => svg`<rect x=${x} y=${221 - h} width="19" height=${h} rx="1" fill="#f6f2f6" />`)}</svg>
                <span>To view, select a column in the table</span>
              </div>
            </div>
            <footer><button>Close</button></footer>
          </section>
        </div>
      </div>`;
  }

  render() {
    return html`
      <div class="topline"></div>
      <div class="desk">
        <span class="behind">R</span><span class="mark m1"></span><span class="mark m2"></span><span class="mark m3"></span>
        <div class="win">
          <div class="tabs">
            <div class="left">
              <div class="tab">${icon(34, svg`<path d="M10 0h12v5h-1v8l10 15q1 4-3 4H4q-4 0-3-4l10-15V5h-1z" fill="#1e9be0" /><path d="M16 10l5 8-6 8h14l-8-13V4h-5z" fill="#1467ae" /><path d="M5 27l6-9 5 4 4-3 7 8q0 2-2 2H6z" fill="#0d4a86" /><path d="M11 18l5-6 5 8-5 4z" fill="#fff" />`)}<span class="t">Microsoft Azure Machine Learning</span><button aria-label="Close tab">${line(22, "M6 6l20 20M26 6L6 26", 4)}</button></div>
              <button class="new" aria-label="New tab">${line(28, "M16 3v26M3 16h26", 3.4)}</button>
            </div>
            <div class="ctl"><button aria-label="Minimize">${line(24, "M2 17h28", 3)}</button><button aria-label="Maximize">${line(24, "M3 3h26v26H3z", 3)}</button><button aria-label="Close">${line(24, "M2 2l28 28M30 2L2 30", 2.4)}</button></div>
          </div>
          <div class="bar">
            <div class="back"><button aria-label="Back">${line(30, "M31 16H3M16 3L3 16l13 13", 3.2)}</button><button class="pale" aria-label="Forward">${line(30, "M1 16h28M16 3l13 13-13 13", 3.2)}</button><button aria-label="Reload">${icon(30, svg`<path d="M27 21a12 12 0 1 1-2-13" stroke="currentColor" stroke-width="3.400" /><path d="M30 1v13H17z" fill="currentColor" />`)}</button></div>
            <div class="omni">${icon(30, svg`<rect x="7" y="12" width="18" height="17" rx="2" fill="#5f5f63" /><path d="M11 13V9a5 5 0 0 1 10 0v4" stroke="#5f5f63" stroke-width="3" />`)}
              <a href="#authoring"><b>ml.azure.com</b>/visualinterface/authoring/Normal/67b22728-e767-4e32-aef5-e606168b189e?wsid=/subscriptions/3cf2889a-2...</a>
              <button aria-label="Bookmark">${line(32, "M16 3l4 9 9 1-7 6 3 10-9-6-9 6 3-10-7-6 9-1z", 2.8)}</button></div>
            ${icon(40, svg`<circle cx="16" cy="16" r="15" fill="#4f5b69" /><circle cx="16" cy="11" r="5" fill="#fff" /><path d="M6 23q10-11 20 0-4 5-10 5T6 23z" fill="#fff" />`)}
            ${icon(28, svg`<circle cx="16" cy="5" r="3" fill="#5f6368" /><circle cx="16" cy="16" r="3" fill="#5f6368" /><circle cx="16" cy="27" r="3" fill="#5f6368" />`)}
          </div>
          ${this.aml()}
        </div>
        <svg class="cursor" width="22" height="36" viewBox="0 0 22 36" aria-hidden="true"><path d="M1 1v28l6-6 5 11 5-2-5-11h9z" fill="#fff" stroke="#000" stroke-width="1" /></svg>
      </div>
      <div class="task">
        <button class="go" aria-label="Start">${icon(34, svg`<path d="M0 5l14-2v12H0zM16 3l16-2v14H16zM0 17h14v12L0 27zM16 17h16v14l-16-2z" fill="#fff" />`)}</button>
        <button class="go" aria-label="Search">${line(34, "M13 11a9 9 0 1 0 18 0a9 9 0 1 0-18 0M15 18L1 31", 2.2)}</button>
        <button class="go" aria-label="Task view">${line(40, "M8 5h16v22H8zM5 8H1v16h4M27 8h4v16h-4", 2)}</button>
        <button class="go" aria-label="Internet Explorer">${icon(46, svg`<text x="16" y="28" text-anchor="middle" font-family="Liberation Sans" font-weight="700" font-size="40" fill="#5cc3f2">e</text><path d="M4 30Q-2 26 7 14 18 1 28 1q4 1 1 8Q28 3 19 7 7 15 4 24q-1 4 4 3z" fill="#f5c433" />`)}</button>
        <button class="go" aria-label="File Explorer">${icon(46, svg`<path d="M1 4h10l2 3h18v21H1z" fill="#f7c95b" /><path d="M1 9h30v19H1z" fill="#fde49b" /><path d="M6 28V16h20v12h-6v-5h-8v5z" fill="#3ea7dd" />`)}</button>
        <button class="go active" aria-label="Google Chrome">${icon(48, wheel(), 48)}</button>
        <div class="tray">
          ${line(34, "M10 6h21v17H12M1 2h9v8H1zM4 10v14h4M21 23v6M13 29h14M4 4v3M7 4v3", 2)}
          ${icon(34, svg`<path d="M2 11h5l7-7v24l-7-7H2z" stroke="#fff" stroke-width="2" /><circle cx="24" cy="23" r="8" fill="#d9232e" /><path d="M21 20l6 6M27 20l-6 6" stroke="#fff" stroke-width="2" />`)}
          <div class="clock">12:37 AM<br />8/9/2020</div>
          ${line(36, "M2 4h28v21H20l-4 5-4-5H2z", 2)}
          <span class="peek"></span>
        </div>
      </div>
      <div class="under"></div>`;
  }
}

/* ---------------- lab guide ---------------- */

@customElement("lab-guide")
export class LabGuide extends LitElement {
  static styles = [reset, css`
    :host { display: flex; flex-direction: column; min-height: 0; min-width: 0; color: #e8e6e1; background: #191a1c; font: 31px/44px "DejaVu Sans Condensed", "DejaVu Sans", "Noto Sans", sans-serif; border-right: 3px solid #3f4041; }
    .frame { flex: 1; min-height: 0; display: flex; flex-direction: column; border-left: 6px double #1566ba; margin-bottom: 6px; }
    .head { height: 148px; flex: none; background: linear-gradient(#094a80, #0a5591 40%); padding: 30px 30px 0; position: relative; white-space: nowrap; }
    .head h2 { font-weight: 700; }
    .btn { background: #2d608f; border-radius: 4px; box-shadow: 0 3px 6px rgba(0,0,0,.35); height: 68px; display: flex; align-items: center; justify-content: center; gap: 6px; font-weight: 700; font-size: 24px; line-height: 30px; }
    .hide { position: absolute; right: 97px; top: 66px; width: 156px; }
    .tabs { height: 84px; flex: none; display: flex; border-top: 2px solid #222426; border-bottom: 3px solid #303234; background: #1d2122; color: #b6b0a7; font-size: 27px; }
    .tabs button { flex: 2; text-align: center; padding-bottom: 18px; border-left: 3px solid #1a1d1e; }
    .tabs .cur { background: #18191b; border: 0; }
    .tabs .short { flex: 1; }
    .read { flex: 1; min-height: 0; display: flex; }
    .text { flex: 1; min-width: 0; overflow: hidden; padding: 0 43px 0 45px; }
    .bar { width: 21px; flex: none; background: #24282a; display: flex; flex-direction: column; justify-content: flex-end; padding-bottom: 8px; }
    .bar i { height: 56px; background: #323537; }
    .shot { display: block; width: 100%; height: auto; overflow: hidden; }
    ol { padding-left: 81px; list-style: none; }
    .step { display: flex; margin: 39px 0 40px -37px; gap: 9px; }
    .step p { flex: 1; margin-right: -6px; }
    h3 { font-size: 58px; line-height: 72px; padding: 38px 0 35px; }
    .last { margin-right: -6px; }
    .foot { height: 116px; flex: none; background: #0a5591; padding: 20px; }
    .outline { width: 367px; height: 71px; border: 2px solid #0d6ac0; position: relative; }
    .prev { position: absolute; left: -4px; top: 4px; width: 220px; }
    .pale { height: 56px; flex: none; background: #e6e6e6; }
    .under { height: 56px; flex: none; background: #191a1d; }
  `];

  private first() {
    return html`<svg class="shot" viewBox="0 0 918 166" font-family="Open Sans, sans-serif" font-size="7" fill="#444" role="img" aria-label="Context menu of the Evaluate Model node">
      <rect width="918" height="166" fill="#f3f3f3" /><rect width="125" height="166" fill="#fff" /><rect x="752" width="166" height="166" fill="#fff" /><path d="M125 0v166M752 0v166M0 20.500h125" stroke="#ddd" />
      <circle cx="11" cy="10" r="3" fill="none" stroke="#1a7fd0" /><text x="17" y="13" fill="#1a6fc0">Web Service</text><path d="M111 6l4 4-4 4" fill="none" stroke="#555" />
      <rect x="459" y="-10" width="145" height="35" rx="4" fill="#fff" stroke="#ddd" /><path d="M469 6v8h8" fill="none" stroke="#1a7fd0" /><path d="M472 8h1M476 6h1M474 11h1" stroke="#1a7fd0" /><text x="484" y="13">Score Model</text><circle cx="591" cy="10" r="4" fill="#57a300" /><path d="M589 10l2 2 3-4" fill="none" stroke="#fff" />
      <path d="M532 27C530 60 408 60 404 90" fill="none" stroke="#c4cad0" stroke-width="1.500" /><circle cx="532" cy="26" r="2.500" fill="#fff" stroke="#bbb" />
      <rect x="356" y="91" width="146" height="29" rx="4" fill="#f0f6ff" stroke="#5cadea" stroke-width="1.500" /><path d="M366 100v8h8" fill="none" stroke="#1a7fd0" /><path d="M369 102h1M373 100h1M371 105h1" stroke="#1a7fd0" /><text x="382" y="108">Evaluate Model</text><circle cx="487" cy="103" r="4" fill="#57a300" />
      <g fill="#fff" stroke="#5cadea"><circle cx="404" cy="91" r="2.500" /><circle cx="453" cy="91" r="2.500" /><circle cx="429" cy="120" r="2.500" /></g>
      <rect x="436" y="105" width="105" height="56" fill="#fff" stroke="#ddd" /><text x="441" y="118">Copy</text><text x="441" y="135">Delete</text>
      <rect x="437" y="145" width="103" height="15" fill="none" stroke="#f0202c" stroke-width="2" /><text x="441" y="154">Visualize Evaluation results</text>
      <rect x="684" y="147" width="59" height="19" fill="#fff" stroke="#ddd" /><path d="M695 153h6v6h-7v-6" fill="none" stroke="#333" /><text x="706" y="160">Navigator</text>
      <text x="763" y="4">Help documentation</text><text x="763" y="23">Evaluates the results of a classification or</text><text x="763" y="32">regression model with standard metrics.</text><text x="763" y="42" fill="#1a6fc0">Learn more</text>
    </svg>`;
  }

  private second() {
    const left = ["Datasets", "Data Input and Output", "Data Transformation", "Feature Selection", "Statistical Functions", "Machine Learning Algorithms", "Model Training", "Model Scoring & Evaluation", "Python Language", "R Language", "Text Analytics", "Recommendation", "Web Service"];
    const cols: [string, string, number, string][] = [["Mean_Absolute_Error", "", 108, "2.147296"], ["Root_Mean_Squared_Err", "or", 189, "3.847992"], ["Relative_Squared_Error", "", 283, "0.139729"], ["Relative_Absolute_Error", "", 370, "0.296874"], ["Coefficient_of_Determ", "tion", 459, "0.860271"]];
    const facts: [string, string][] = [["Status", "Completed"], ["Submit time", "February 12, 2020 5:12 PM"], ["End time", "February 12, 2020 5:27 PM"], ["Duration", "14m 12s"], ["Description", "Pipeline-Created-on-02-12-2020"], ["Run ID", "ccaa4f41-7c18-45cc-9bf6-a78dfd8b1587"], ["Experiment", "neural-network-regression"]];
    return html`<svg class="shot" viewBox="0 0 918 426" font-family="Open Sans, sans-serif" font-size="7" fill="#222" role="img" aria-label="Result visualization dialog">
      <defs><clipPath id="side"><path d="M0 0h125v426H0z" /></clipPath></defs>
      <rect width="918" height="426" fill="#9b9b9b" /><rect x="126" y="36" width="626" height="390" fill="#949494" /><path d="M125.500 0v426M752 54v372M126 36h792M752 54h166" stroke="#868686" fill="none" />
      <rect x="8" y="7" width="109" height="17" fill="none" stroke="#555" /><text x="26" y="19">Search</text><circle cx="20" cy="14" r="3" fill="none" stroke="#1e4f8f" /><path d="M18 17l-3 4" stroke="#1e4f8f" />
      <g clip-path="url(#side)" fill="#0f4579">${left.map((t, i) => svg`<circle cx="11" cy=${42 + i * 22} r="3" fill="none" stroke="#0f4579" /><text x="17" y=${45 + i * 22}>${t}</text><path d="M0 ${53 + i * 22}h125" stroke="#8a8a8a" />`)}</g>
      <text x="138" y="21" font-size="8" font-weight="600">Pipeline-Created-on-02-12-2020</text><circle cx="277" cy="18" r="4" fill="none" stroke="#444" /><circle cx="277" cy="18" r="1.500" fill="none" stroke="#444" />
      <rect x="678" y="9" width="42" height="18" fill="#083f91" /><text x="699" y="21" text-anchor="middle" fill="#b5c3d9">Run</text>
      <rect x="723" y="9" width="118" height="18" fill="none" stroke="#555" /><text x="733" y="21" font-weight="600">Create inference pipeline</text><path d="M826 15l4 5 4-5" fill="none" stroke="#333" />
      <rect x="844" y="9" width="45" height="18" fill="none" stroke="#555" /><text x="867" y="21" text-anchor="middle" font-weight="600">Publish</text><text x="897" y="20">···</text>
      <text x="808" y="48">Run finished</text><text x="853" y="48" font-size="6" fill="#0f4579">View run overview</text>
      <text x="762" y="73" font-size="10" font-weight="600">Run overview</text><path d="M897 66l5 5M902 66l-5 5" stroke="#333" /><text x="762" y="93" font-weight="600">Attributes</text><text x="811" y="93">Pipeline parameters</text><path d="M762 102h34" stroke="#0f4f9f" stroke-width="2" />
      ${facts.map(([k, v], i) => svg`<text x="762" y=${122 + i * 22.6} font-size="6" fill="#555">${k}</text><text x="762" y=${132 + i * 22.6} fill=${i === 6 ? "#0f4579" : "#222"}>${v}</text>`)}
      <rect x="354" y="380" width="147" height="36" rx="3" fill="#959ba2" stroke="#3e76ac" stroke-width="1.500" /><text x="381" y="404">Evaluate Model</text><path d="M366 398v8h8" fill="none" stroke="#0f4579" /><circle cx="487" cy="400" r="4" fill="#347000" /><circle cx="428" cy="416" r="2.500" fill="#aaa" stroke="#3e76ac" />
      <rect x="88" y="42" width="656" height="358" fill="#3a3a3a" opacity=".35" /><rect x="90" y="40" width="652" height="355" fill="#fff" />
      <text x="102" y="64" font-size="10">Evaluate Model result visualization</text><path d="M717 55l9 9M726 55l-9 9" stroke="#555" />
      <g font-size="8" fill="#777"><text x="102" y="99">Rows</text><text x="139" y="99">Columns</text><text x="102" y="110">1</text><text x="139" y="110">5</text></g>
      ${cols.map(([a, b, x, v]) => svg`<text x=${x} y=${b ? 129 : 133}>${a}</text>${b ? svg`<text x=${x} y="138">${b}</text>` : ""}<path d="M${x + 13} 152v22" stroke="#0f78d4" stroke-width="2" /><text x=${x} y="187" fill="#888">${v}</text>`)}
      <path d="M102 144h427M535 118v235" stroke="#ddd" /><rect x="102" y="344" width="427" height="8" fill="#f2f2f2" /><rect x="111" y="344" width="393" height="8" fill="#c1c1c1" /><path d="M107 346v4l-2-2zM524 346v4l2-2z" fill="#444" />
      <path d="M581 198v62h77" fill="none" stroke="#e6e6e6" />${[18, 16, 35, 13, 26, 35, 44, 13, 35, 26].map((h, i) => svg`<rect x=${587 + i * 6.4} y=${255 - h} width="5" height=${h} fill="#ececec" />`)}
      <text x="560" y="271" fill="#333">To view, select a column in the table</text>
      <rect x="688" y="366" width="42" height="17" fill="#0d5bd7" /><text x="709" y="377" text-anchor="middle" fill="#fff">Close</text>
    </svg>`;
  }

  render() {
    return html`
      <div class="frame">
        <div class="head"><h2>Classical ML vs. Deep Learning:Multiclass neural net module</h2><p>0 hour(s), 38 minute(s) remaining</p>
          <button class="btn hide">${icon(22, svg`<circle cx="16" cy="16" r="15" fill="#e8e6e1" /><path d="M10 10l12 12M22 10L10 22" stroke="#2d608f" stroke-width="5" />`)}HIDE</button></div>
        <div class="tabs"><button class="cur">Lab Guide</button><button>Lab Environment</button><button class="short">Help</button></div>
        <div class="read">
          <div class="text">
            <ol>
              <li>${this.first()}</li>
              <li><div class="step"><span>2.</span><p>Evaluate the model performance by reviewing the various evaluation metrics, such as <b>Mean Absolute Error</b>, <b>Root Mean Squared Error</b>, etc.</p></div>${this.second()}</li>
            </ol>
            <h3>Next Steps</h3>
            <p class="last">Congratulations! You have trained a simple neural net model using the prebuilt Neural Network Regression module in the AML visual designer. You can continue to experiment in the environment but are free to close the lab environment tab and return to the Udacity portal to</p>
          </div>
          <div class="bar"><i></i></div>
        </div>
      </div>
      <div class="foot"><div class="outline"><button class="btn prev">${icon(22, svg`<path d="M30 13v6H13l7 7-4 5L1 16 16 1l4 5-7 7z" fill="#e8e6e1" />`)}PREVIOUS</button></div></div>
      <div class="pale"></div><div class="under"></div>`;
  }
}

/* ---------------- dock ---------------- */

const dockIcons: [string, Frag, boolean?, string?][] = [
  ["Finder", svg`<rect x="8" y="10" width="80" height="76" rx="4" fill="#e6edf5" /><path d="M12 10h38q-6 20-7 44h10q0 16 3 32H12q-4 0-4-4V14q0-4 4-4z" fill="url(#fb)" /><path d="M30 30v8M66 30v8" stroke="#16304f" stroke-width="3.500" stroke-linecap="round" /><path d="M24 58q24 22 48 0M50 10q-6 20-7 44h10q0 16 3 32" stroke="#16304f" stroke-width="2.400" stroke-linecap="round" />`, true],
  ["Siri", svg`<circle cx="48" cy="48" r="43" fill="#dcdbe2" /><circle cx="48" cy="48" r="39" fill="url(#si)" /><path d="M48 50Q30 20 40 14q22 6 8 36z" fill="#d14bb0" opacity=".7" /><path d="M48 50Q20 26 14 44q4 18 34 6z" fill="#54509f" opacity=".8" /><path d="M48 50q30-22 34-4-2 18-34 4z" fill="#7058a8" opacity=".7" /><path d="M17 68q10-16 31-20l6 36q-8-14-12-28-14 2-25 12z" fill="#57d9e6" opacity=".8" /><path d="M50 50l26 12q-8 6-24-8z" fill="#4fd59a" opacity=".8" /><path d="M48 26q1 16 6 19l10 3-10 4-2 34-6-34-16-2 14-4z" fill="#fff" opacity=".8" /><circle cx="49" cy="48" r="5" fill="#fff" />`],
  ["Launchpad", svg`<circle cx="48" cy="48" r="43" fill="url(#gr)" /><path d="M73 21q-18 2-30 24l-14 2-8 13 12-2 9 11-1 13 9-10 2-14q20-14 21-37z" fill="#41484d" /><circle cx="58" cy="38" r="5" fill="#b5bfc4" /><path d="M30 64q-8 4-8 14 8-2 12-10z" fill="#41484d" />`],
  ["Safari", compass(), true],
  ["Mail", svg`<path d="M10 14L76 3l11 79-62 12z" fill="#fff" stroke="#fff" stroke-width="3" stroke-dasharray="3 2.400" /><path d="M17 19l54-9 9 66-50 10z" fill="#2f86de" /><path d="M26 62l46-8 7 22-49 10z" fill="#8fbfe6" /><path d="M22 16q6 4 10 14 8 8 10 16 8 0 12 6 12 10 16 22-14-2-24-10l-8 2q-8-2-10-8 4-8 0-18-6-12-6-24z" fill="#5b4330" /><path d="M30 58l14-8 6 6-12 8z" fill="#c99a56" /><circle cx="74" cy="72" r="13" stroke="#44587a" stroke-width="2" opacity=".6" />`],
  ["Contacts", svg`<path d="M68 8h10l3 22-9 4z" fill="#d9dde0" /><path d="M70 28h11l2 20-10 2z" fill="#48b5d8" /><path d="M72 45h12l1 18-11 2z" fill="#40b568" /><path d="M74 62h12l1 16-12 2z" fill="#e19a25" /><path d="M10 12L66 1q4 0 5 5l9 72q0 5-4 6L22 91z" fill="#a87a44" /><path d="M10 12l4-1 12 79-4 1z" fill="#8c6234" /><ellipse cx="48" cy="42" rx="20" ry="22" stroke="#8c6234" stroke-width="2" /><circle cx="48" cy="36" r="8" fill="#8c6234" /><path d="M34 56q14-12 28 0-6 8-14 8t-14-8z" fill="#8c6234" />`],
  ["Calendar", svg`<path d="M8 21l68-12 12 70-70 10z" fill="#56626c" /><path d="M11 20l62-14 10 68q-30 6-62 14z" fill="#fff" /><path d="M11 20l62-14 3 21-61 13z" fill="#e5514c" /><text x="44" y="28" text-anchor="middle" font-family="Inter" font-size="18" fill="#fff" transform="rotate(-8 44 28)">AUG</text><text x="48" y="75" text-anchor="middle" font-family="Inter" font-size="46" font-weight="300" fill="#222" transform="rotate(-6 48 70)">9</text>`],
  ["Notes", svg`<path d="M10 14L74 3l12 79-64 10z" fill="#fbfbf6" /><path d="M10 14L74 3l3 14-64 11z" fill="#fbc62e" /><path d="M14 38l64-11M15 46l64-11M16 54l64-11M17 62l65-11M19 70l64-11M20 78l65-11" stroke="#c4c4bd" stroke-width="1.500" />`],
  ["Reminders", svg`<path d="M14 12L66 3q5 0 6 5l10 70q0 5-5 6l-50 8q-5 0-6-5L11 17q0-4 3-5z" fill="#f7f8f8" /><circle cx="24" cy="27" r="6" fill="#2f6fe4" /><circle cx="26" cy="42" r="6" fill="#dd3a34" /><circle cx="28" cy="57" r="6" fill="#f09a37" /><circle cx="31" cy="72" r="6" fill="#4d545b" /><path d="M36 24l33-5M38 39l33-5M40 54l33-5M43 69l33-5" stroke="#999" stroke-width="1.600" />`],
  ["Maps", svg`<path d="M8 19l70-11 10 68-66 12z" fill="#ece9df" /><path d="M48 12l28-4 4 24-20 6z" fill="#8bd46e" /><path d="M10 40l34 20 36 16-24 6-30-20z" fill="#fbc62e" /><path d="M14 56l8 30 18-4-6-22z" fill="#f39db2" /><path d="M26 16h9l4 62h-9z" fill="#1f78d6" /><circle cx="34" cy="56" r="11" fill="#1b8aec" /><path d="M34 47l6 16-6-4-6 4z" fill="#fff" /><circle cx="75" cy="66" r="20" fill="#eef1f3" stroke="#c6cbd0" /><circle cx="75" cy="66" r="12" stroke="#4a97c9" stroke-width="1.600" /><text x="75" y="71" text-anchor="middle" font-family="Inter" font-size="12" fill="#333">3D</text><path d="M75 48l3 4h-6z" fill="#e02020" />`],
  ["Photos", svg`<circle cx="48" cy="48" r="43" fill="#f1f1ef" />${["#f7941e", "#f5d327", "#b9d533", "#63b345", "#4e9fd6", "#6f76c4", "#b363a5", "#e23b3b"].map((c, i) => svg`<rect x="38" y="13" width="20" height="34" rx="10" fill=${c} opacity=".82" transform="rotate(${i * 45} 48 48)" />`)}`],
  ["Messages", svg`<path d="M48 9a42 36 0 0 1 0 74q-8 0-14-2-6 6-14 5 5-6 4-12A42 36 0 0 1 48 9z" fill="#389df5" /><path d="M66 43a25 21 0 0 1 8 42q3 5 6 7-8 0-14-6a25 21 0 0 1 0-43z" fill="#f2f7fb" /><circle cx="56" cy="65" r="3.600" fill="#17599c" /><circle cx="67" cy="65" r="3.600" fill="#17599c" /><circle cx="78" cy="65" r="3.600" fill="#17599c" />`],
  ["FaceTime", svg`<rect x="5" y="11" width="76" height="68" rx="10" fill="#35d24e" /><rect x="17" y="28" width="37" height="34" rx="7" fill="#f4f6f4" /><path d="M57 40l14-9v28l-14-6z" fill="#f4f6f4" /><circle cx="69" cy="63" r="21" fill="#f0f3ef" /><path d="M60 52l6-2 4 8-4 4q3 6 8 9l4-4 6 6-3 5q-20-2-21-26z" fill="#35c34c" />`],
  ["Pages", svg`<path d="M7 13L70 3l12 78-62 11z" fill="#fbfbfa" /><path d="M7 13L70 3l3 13-64 12z" fill="#f6932b" /><text x="14" y="24" font-family="Inter" font-size="13" fill="#fff" transform="rotate(-9 14 24)">PAGES</text><path d="M17 32l27-5 4 20-28 5z" fill="#2a72c9" /><path d="M26 32l7 4 6-4-3 12h-6z" fill="#f08327" /><path d="M22 58l50-8M23 64l50-8M24 72l50-8M25 78l50-8M48 30l16-3M49 36l16-3M50 42l16-3" stroke="#b8b8b8" stroke-width="2" /><path d="M72 3l9 2-17 62-7-2z" fill="#e98d20" /><path d="M60 64l6 2-9 26-3-1z" fill="#555c63" />`],
  ["Numbers", svg`<path d="M6 53h78l4 35H4z" fill="#f3f3f3" /><path d="M16 48h14v31H16z" fill="#e53b4d" /><path d="M33 32h13v47H33z" fill="#f58a1f" /><path d="M49 8h14v71H49z" fill="#3cc04f" /><path d="M66 22h14v57H66z" fill="#2b8df0" /><path d="M16 48h14v5H16zM33 32h13v5H33zM49 8h14v5H49zM66 22h14v5H66z" fill="#fff" opacity=".3" />`],
  ["Keynote", svg`<path d="M18 6h62l6 32v4H10v-4z" fill="#2796e8" /><path d="M10 36h76v5H10z" fill="#75c5f5" /><path d="M24 11h48v22H24z" fill="#fff" /><circle cx="38" cy="24" r="7" fill="#e3a83c" /><path d="M38 17a7 7 0 0 1 7 7h-7z" fill="#41a5e0" /><path d="M52 18h14M52 23h14M52 28h14" stroke="#a8b3bb" stroke-width="2" /><path d="M45 42h6v44h-6z" fill="#c7ced3" /><ellipse cx="48" cy="86" rx="18" ry="6" fill="#aeb9c2" />`],
  ["App Store", svg`<circle cx="48" cy="48" r="43" fill="#1b86f3" /><path d="M50 24L32 58M44 24l22 42M23 56h28M62 56h12M30 66l-3 4" stroke="#f3f7fb" stroke-width="7" stroke-linecap="round" />`, false, "1"],
  ["System Preferences", svg`<rect x="6" y="8" width="84" height="80" rx="8" fill="#8d9399" /><circle cx="48" cy="48" r="35" fill="#1d1e20" /><circle cx="48" cy="48" r="26" fill="#2b2c2e" stroke="#9b9d9f" stroke-width="4" /><circle cx="48" cy="48" r="30" stroke="#9b9d9f" stroke-width="5" stroke-dasharray="4 3.850" /><path d="M48 48V22M48 48l22 13M48 48L26 61" stroke="#a5a7a9" stroke-width="4" /><circle cx="48" cy="48" r="6" fill="#b4b6b8" />`],
  ["Terminal", svg`<rect x="7" y="10" width="82" height="76" rx="4" fill="#1e1f20" stroke="#a8abad" stroke-width="2" /><rect x="12" y="15" width="72" height="64" fill="#262728" /><text x="16" y="36" font-family="Liberation Mono" font-weight="700" font-size="20" fill="#f2f2f2">&gt;_</text>`],
  ["Podcasts", svg`<circle cx="48" cy="48" r="43" fill="#a445d2" /><circle cx="48" cy="44" r="26" stroke="#f5ebfa" stroke-width="5" stroke-dasharray="125 200" transform="rotate(130 48 44)" /><circle cx="48" cy="44" r="16" stroke="#f5ebfa" stroke-width="5" stroke-dasharray="72 200" transform="rotate(140 48 44)" /><circle cx="48" cy="44" r="6.500" fill="#f5ebfa" /><path d="M42 58q6-6 12 0l-2 20q-4 4-8 0z" fill="#f5ebfa" />`],
  ["TV", svg`<circle cx="48" cy="48" r="43" fill="#262627" /><circle cx="48" cy="48" r="38" fill="#09090a" /><g transform="translate(19 32) scale(1.100)"><path d=${applePath} fill="#f4f4f4" /></g><text x="45" y="59" font-family="Inter" font-weight="500" font-size="30" fill="#f4f4f4">tv</text>`],
];

const chromeDock = svg`<g transform="translate(1 1) scale(1.958)">${wheel()}</g>`;
const slackDock = svg`<circle cx="48" cy="48" r="43" fill="#f7f6f7" /><g transform="translate(20 20) scale(2.300)">${hash()}</g>`;
const rightIcons: [string, Frag, boolean?, string?][] = [
  ["Chrome", chromeDock, true],
  ["Slack", slackDock, true, "137"],
  ["GitHub Desktop", svg`<circle cx="48" cy="48" r="46" fill="#f2eff4" /><g transform="translate(6 6) scale(3.500)"><path d=${octocatPath} fill="#6a3590" /></g>`, true],
];
const minis: [string, Frag][] = [
  ["Safari window", svg`<rect x="0" y="19" width="94" height="56" fill="#101412" /><path d="M0 19h94v3H0z" fill="#4a4e50" /><path d="M50 22h36v11H50z" fill="#000" /><path d="M8 28h28M8 33h34M8 38h30M8 50h30M8 55h34M8 66h30" stroke="#3c5343" stroke-width="2" /><path d="M6 24h22M6 42h34M6 60h28" stroke="#16803a" stroke-width="1.500" /><g transform="translate(60 58) scale(.34)">${compass()}</g>`],
  ["Slack window", svg`<rect x="2" y="20" width="92" height="55" fill="#17181b" /><path d="M2 20h18v55H2z" fill="#24192a" /><path d="M24 26h26v8H24z" fill="#dfe3e6" /><path d="M26 38h40M26 43h54M26 48h20M26 56h50M26 62h36M6 30h10M6 36h10M6 42h10M6 56h10" stroke="#4b5560" stroke-width="1.600" /><path d="M6 47h14M52 27h10M54 67h8" stroke="#1b74b8" stroke-width="3" /><g transform="translate(60 58) scale(.34)">${slackDock}</g>`],
  ["Paper window", svg`<rect x="0" y="22" width="94" height="51" fill="#54575b" /><path d="M0 22h94v5H0z" fill="#1b1c1e" /><path d="M24 28h46v44H24z" fill="#f4f4f4" /><path d="M28 52h38M28 57h38M28 62h38M28 67h38" stroke="#a0a0a0" /><path d="M34 34l8 6-8 6" stroke="#8a8ec9" /><g transform="translate(60 58) scale(.34)">${chromeDock}</g>`],
  ["Guide window", svg`<rect x="0" y="22" width="94" height="51" fill="#1a1b1d" /><path d="M0 22h94v4H0z" fill="#000" /><path d="M14 27h14v9H14zM30 27h18v9H30zM50 27h12v9H50z" fill="#c4c8cb" /><path d="M14 42h40M14 50h36M14 58h42M14 66h30" stroke="#4b5560" stroke-width="1.600" /><path d="M18 46h30M18 54h34M18 62h26" stroke="#1d5e8e" stroke-width="1.600" /><g transform="translate(60 58) scale(.34)">${chromeDock}</g>`],
];

@customElement("mac-dock")
export class MacDock extends LitElement {
  static styles = [reset, css`
    :host { display: flex; justify-content: center; flex: none; padding-top: 36px; }
    .dock { display: flex; height: 130px; border: 2px solid #3b414f; border-bottom: 0; border-radius: 12px 12px 0 0; background: linear-gradient(90deg, #161d2c, #181b2d 20%, #16202f 60%, #151d30); padding: 0 4px; }
    .slot { width: 106px; display: flex; flex-direction: column; align-items: center; padding-top: 12px; gap: 7px; position: relative; }
    .run { width: 8px; height: 8px; border-radius: 50%; background: #98a1b3; }
    .sep { width: 2px; height: 94px; background: #454c5a; margin: 18px 24px 0; }
    .badge { position: absolute; right: 2px; top: 8px; min-width: 38px; height: 38px; padding: 0 4px; border-radius: 19px; background: #ec3b38; color: #fff; font: 22px/38px Inter, sans-serif; text-align: center; }
  `];
  private slot_([name, body, running, badge]: [string, Frag, boolean?, string?]) {
    return html`<button class="slot" aria-label=${name}><svg width="96" height="96" viewBox="0 0 96 96" fill="none" aria-hidden="true"><defs><linearGradient id="fb" x2="0" y2="1"><stop stop-color="#2fd3fb" /><stop offset="1" stop-color="#2273ee" /></linearGradient><linearGradient id="gr" x2="0" y2="1"><stop stop-color="#cfdfe6" /><stop offset="1" stop-color="#7c7f81" /></linearGradient><linearGradient id="si" x2="0" y2="1"><stop stop-color="#b32a7d" /><stop offset=".5" stop-color="#241a55" /><stop offset="1" stop-color="#112a66" /></linearGradient></defs>${body}</svg>${running ? html`<span class="run"></span>` : ""}${badge ? html`<span class="badge">${badge}</span>` : ""}</button>`;
  }
  render() {
    return html`<nav class="dock" aria-label="Dock">
      ${dockIcons.map((d) => this.slot_(d))}<span class="sep"></span>${rightIcons.map((d) => this.slot_(d))}<span class="sep"></span>
      ${minis.map((m) => this.slot_(m))}
      ${this.slot_(["Trash", svg`<path d="M14 14l8 70q2 8 26 8t26-8l8-70z" fill="#767c80" opacity=".85" /><ellipse cx="48" cy="14" rx="34" ry="9" fill="#3c4654" stroke="#a3a8ab" stroke-width="2" /><path d="M26 80q22 12 44 0l-2 6q-20 10-40 0z" fill="#b6babc" opacity=".6" />`])}
    </nav>`;
  }
}

/* ---------------- root ---------------- */

@customElement("app-root")
export class AppRoot extends LitElement {
  static styles = [reset, css`
    :host { display: flex; flex-direction: column; height: 100vh; overflow: hidden;
      background: radial-gradient(circle at 2200px 61px, #c9d6e6 0, transparent 2px), radial-gradient(circle at 1354px 61px, #c9d6e6 0, transparent 2px), radial-gradient(circle at 1120px 48px, #c9d6e6 0, transparent 2px),
        linear-gradient(rgba(5,10,20,0) 60px, #050b16 300px, #060c17 96%, #070d18), linear-gradient(90deg, #2a4a78, #18386a 35%, #0f2c5a 60%, #051538); }
    .window { flex: 1; min-height: 0; margin-top: 22px; display: flex; flex-direction: column; border-top: 2px solid #4b4b4b; border-radius: 12px 12px 10px 10px; overflow: hidden; box-shadow: 0 0 0 1px #000, 0 14px 30px #000; background: #191a1d; }
    .lesson { display: flex; align-items: center; justify-content: space-between; height: 114px; flex: none; background: #171e26; border-bottom: 2px solid #8a7d6b; padding: 14px 94px 0 44px; font: 32px/44px "Open Sans", sans-serif; color: #e3e0da; }
    .lesson h1 { padding-right: 24px; }
    .lesson .end { color: #3ccfff; font-weight: 600; font-size: 30px; }
    .content { flex: 1; min-height: 0; display: grid; grid-template-columns: minmax(0, 2fr) minmax(0, 1fr); grid-template-rows: minmax(0, 1fr); }
  `];
  render() {
    return html`
      <mac-menubar></mac-menubar>
      <div class="window">
        <browser-chrome></browser-chrome>
        <header class="lesson">
          <button aria-label="Open navigation"><svg width="36" height="28" viewBox="0 0 36 28" aria-hidden="true"><path d="M1 2h34M1 14h34M1 26h34" stroke="#3ccfff" stroke-width="4" stroke-linecap="round" /></svg></button>
          <h1>Lab: Train a Simple Neural Net</h1>
          <a class="end" href="#feedback">SEND FEEDBACK</a>
        </header>
        <main class="content"><remote-desktop></remote-desktop><lab-guide></lab-guide></main>
      </div>
      <mac-dock></mac-dock>`;
  }
}
